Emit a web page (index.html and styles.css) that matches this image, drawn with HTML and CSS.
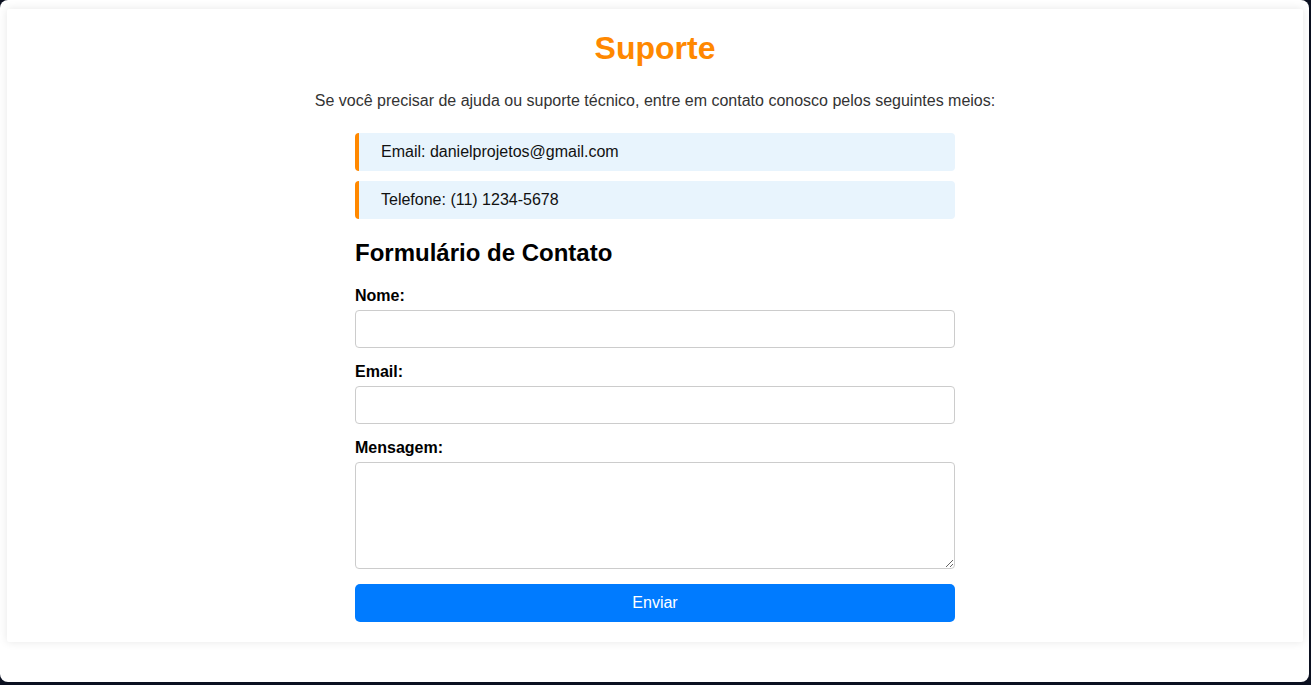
FILE: index.html
```html
<!DOCTYPE html>
<html lang="pt-BR">
<head>
<meta charset="utf-8">
<title>Suporte</title>
<link rel="stylesheet" href="styles.css">
</head>
<body>
<div class="window">
  <main class="container">
    <h1 class="title">Suporte</h1>
    <p class="intro">Se você precisar de ajuda ou suporte técnico, entre em contato conosco pelos seguintes meios:</p>
    <div class="content">
      <div class="info">Email: danielprojetos@gmail.com</div>
      <div class="info">Telefone: (11) 1234-5678</div>
      <h2 class="form-title">Formulário de Contato</h2>
      <form class="form">
        <label class="label" for="nome">Nome:</label>
        <input class="field" id="nome" type="text">
        <label class="label" for="email">Email:</label>
        <input class="field" id="email" type="email">
        <label class="label" for="msg">Mensagem:</label>
        <textarea class="field area" id="msg"></textarea>
        <button class="submit" type="button">Enviar</button>
      </form>
    </div>
  </main>
</div>
</body>
</html>
```
FILE: styles.css
```css
html {
  background: #0b1020;
}
body {
  margin: 0;
  font-family: "Liberation Sans", Arial, sans-serif;
}
.window {
  box-sizing: border-box;
  width: 1309px;
  height: 682px;
  background: #ffffff;
  border-radius: 8px;
  padding: 9px 6px 0 7px;
}
.container {
  background: #ffffff;
  box-shadow: 0 0 10px rgba(0, 0, 0, 0.1);
  padding: 20px;
  border-radius: 2px;
}
.title {
  margin: 1px 0 25px;
  text-align: center;
  color: #ff8800;
  font-size: 32px;
  line-height: 37px;
}
.intro {
  margin: 0 0 23px;
  text-align: center;
  color: #333333;
  font-size: 16px;
  line-height: 18px;
}
.content {
  width: 600px;
  margin: 0 auto;
}
.info {
  background: #e8f4fd;
  border-left: 4px solid #ff8800;
  border-radius: 4px;
  padding: 10px 22px;
  font-size: 16px;
  line-height: 18px;
  color: #111111;
  margin-bottom: 10px;
}
.form-title {
  margin: 20px 0 20px;
  font-size: 24px;
  line-height: 28px;
  color: #000000;
}
.form {
  display: flex;
  flex-direction: column;
}
.label {
  font-weight: bold;
  font-size: 16px;
  line-height: 18px;
  color: #000000;
  margin-bottom: 5px;
}
.field {
  box-sizing: border-box;
  height: 38px;
  border: 1px solid #cccccc;
  border-radius: 4px;
  padding: 10px;
  font-family: "Liberation Sans", Arial, sans-serif;
  font-size: 16px;
  margin: 0 0 15px;
  background: #ffffff;
}
.area {
  height: 107px;
  resize: both;
}
.submit {
  height: 38px;
  border: none;
  border-radius: 5px;
  background: #007bff;
  color: #ffffff;
  font-family: "Liberation Sans", Arial, sans-serif;
  font-size: 16px;
  cursor: pointer;
}
```
